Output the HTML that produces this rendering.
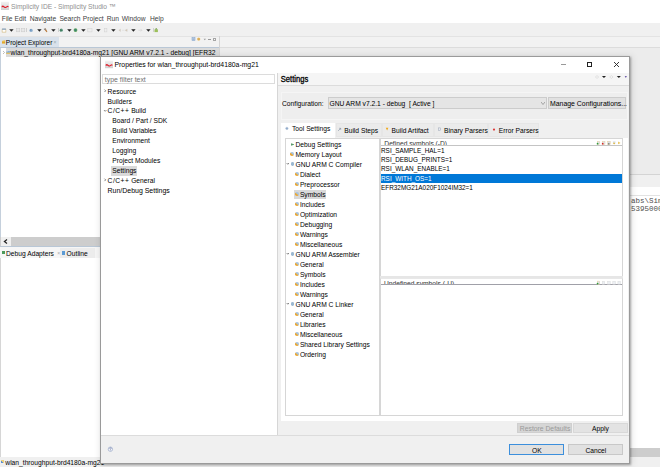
<!DOCTYPE html>
<html><head><meta charset="utf-8"><style>
html,body{margin:0;padding:0;}
body{width:660px;height:467px;position:relative;overflow:hidden;background:#f0f0f0;font-family:"Liberation Sans",sans-serif;}
.a{position:absolute;}
.t{position:absolute;white-space:pre;line-height:1;-webkit-text-stroke:0px currentColor;}
</style></head><body>
<div class="a" style="left:0px;top:0px;width:660px;height:12px;background:#ffffff;"></div>
<div class="a" style="left:0px;top:12px;width:660px;height:11px;background:#ffffff;"></div>
<div class="a" style="left:0px;top:23px;width:660px;height:13px;background:#f0f0f0;"></div>
<svg class="a" style="left:1px;top:1px;overflow:visible" width="9" height="10" viewBox="0 0 9 10"><g transform="translate(0.00,0.80)"><defs><linearGradient id="lg1" x1="0" y1="0" x2="0" y2="1"><stop offset="0" stop-color="#f2f2f2"/><stop offset="1" stop-color="#cfcfcf"/></linearGradient></defs><rect width="8" height="8.2" fill="url(#lg1)"/><path d="M0.6 4.2 Q2 3.2 3.2 4.4 Q4.4 5.8 5.6 4.4 Q6.6 3.6 7.6 4.4 L7.4 5.4 Q6.4 4.8 5.6 5.6 Q4.2 7 3 5.6 Q2 4.6 0.8 5.6Z" fill="#e01c2a"/></g></svg>
<div class="t" style="left:0;top:0;transform:translate(11px,4px) scaleX(0.9346);transform-origin:0 0;font-size:7.15px;color:#909090;-webkit-text-stroke:0;">Simplicity IDE - Simplicity Studio ™</div>
<div class="t" style="left:0;top:0;transform:translate(1.8px,16px) scaleX(0.9346);transform-origin:0 0;font-size:7.17px;color:#404040;">File</div>
<div class="t" style="left:0;top:0;transform:translate(14.5px,16px) scaleX(0.9346);transform-origin:0 0;font-size:7.17px;color:#404040;">Edit</div>
<div class="t" style="left:0;top:0;transform:translate(29.7px,16px) scaleX(0.9346);transform-origin:0 0;font-size:7.17px;color:#404040;">Navigate</div>
<div class="t" style="left:0;top:0;transform:translate(59.4px,16px) scaleX(0.9346);transform-origin:0 0;font-size:7.17px;color:#404040;">Search</div>
<div class="t" style="left:0;top:0;transform:translate(82.8px,16px) scaleX(0.9346);transform-origin:0 0;font-size:7.17px;color:#404040;">Project</div>
<div class="t" style="left:0;top:0;transform:translate(106.7px,16px) scaleX(0.9346);transform-origin:0 0;font-size:7.17px;color:#404040;">Run</div>
<div class="t" style="left:0;top:0;transform:translate(121.7px,16px) scaleX(0.9346);transform-origin:0 0;font-size:7.17px;color:#404040;">Window</div>
<div class="t" style="left:0;top:0;transform:translate(150px,16px) scaleX(0.9346);transform-origin:0 0;font-size:7.17px;color:#404040;">Help</div>
<svg class="a" style="left:1px;top:28px;overflow:visible" width="7" height="6" viewBox="0 0 7 6"><g transform="translate(0.80,0.30)"><rect x="0.3" y="0.8" width="3.8" height="3" fill="#fff" stroke="#c9a860" stroke-width="0.5"/><rect x="0.3" y="0.3" width="3.8" height="1" fill="#6d95c8"/></g></svg>
<svg class="a" style="left:9.2px;top:29px" width="5" height="3" viewBox="0 0 5 3"><path d="M0.2 0.2H4.6L2.4 2.8Z" fill="#222"/></svg>
<svg class="a" style="left:16px;top:28px;overflow:visible" width="6" height="6" viewBox="0 0 6 6"><g transform="translate(0.30,0.30)"><rect x="0.3" y="0.3" width="3.2" height="3.2" fill="#e8e8e8" stroke="#c8c8c8" stroke-width="0.5"/></g></svg>
<svg class="a" style="left:21px;top:28px;overflow:visible" width="6" height="6" viewBox="0 0 6 6"><g transform="translate(0.30,0.30)"><rect x="0.3" y="0.3" width="3.2" height="3.2" fill="#e8e8e8" stroke="#c8c8c8" stroke-width="0.5"/></g></svg>
<div class="a" style="left:26px;top:27.8px;width:0.6px;height:4.6px;background:#d0d0d0;"></div>
<svg class="a" style="left:29px;top:28px;overflow:visible" width="5" height="6" viewBox="0 0 5 6"><g transform="translate(0.20,0.50)"><circle cx="1.9" cy="1.9" r="1.7" fill="#8fb0cf"/><circle cx="1.6" cy="1.5" r="0.7" fill="#5a85b5"/></g></svg>
<svg class="a" style="left:36.6px;top:29px" width="5" height="3" viewBox="0 0 5 3"><path d="M0.2 0.2H4.6L2.4 2.8Z" fill="#222"/></svg>
<svg class="a" style="left:43px;top:28px;overflow:visible" width="6" height="6" viewBox="0 0 6 6"><g transform="translate(0.60,0.00)"><path d="M0.5 1.2L2 0.2L3.8 3.8L3 4.2Z" fill="#b7783a"/><rect x="0.3" y="0.6" width="2" height="1.2" fill="#8a8a8a"/></g></svg>
<svg class="a" style="left:51px;top:29px" width="5" height="3" viewBox="0 0 5 3"><path d="M0.2 0.2H4.6L2.4 2.8Z" fill="#222"/></svg>
<div class="a" style="left:57.6px;top:27.8px;width:0.6px;height:4.6px;background:#d0d0d0;"></div>
<svg class="a" style="left:59px;top:28px;overflow:visible" width="6" height="6" viewBox="0 0 6 6"><g transform="translate(0.40,0.30)"><circle cx="1.9" cy="1.9" r="1.6" fill="#6aa08a"/><path d="M0.8 0.6L3.4 1.9L0.8 3.2Z" fill="#3d7a5a"/></g></svg>
<svg class="a" style="left:66.8px;top:29px" width="5" height="3" viewBox="0 0 5 3"><path d="M0.2 0.2H4.6L2.4 2.8Z" fill="#222"/></svg>
<svg class="a" style="left:73px;top:28px;overflow:visible" width="6" height="6" viewBox="0 0 6 6"><g transform="translate(0.40,0.00)"><circle cx="2.1" cy="2.1" r="1.9" fill="#5aa35a"/><path d="M1.4 0.9L3.2 2.1L1.4 3.3Z" fill="#2d6a8f"/></g></svg>
<svg class="a" style="left:80.7px;top:29px" width="5" height="3" viewBox="0 0 5 3"><path d="M0.2 0.2H4.6L2.4 2.8Z" fill="#222"/></svg>
<svg class="a" style="left:87px;top:28px;overflow:visible" width="7" height="6" viewBox="0 0 7 6"><g transform="translate(0.50,0.20)"><rect x="0.3" y="0.5" width="4.2" height="3.2" fill="#eee" stroke="#d0d0d0" stroke-width="0.5"/></g></svg>
<svg class="a" style="left:96.4px;top:29px" width="5" height="3" viewBox="0 0 5 3"><path d="M0.2 0.2H4.6L2.4 2.8Z" fill="#222"/></svg>
<svg class="a" style="left:104px;top:28px;overflow:visible" width="5" height="6" viewBox="0 0 5 6"><g transform="translate(0.00,0.20)"><rect x="0.3" y="0.3" width="2.6" height="3.4" fill="#eee" stroke="#d0d0d0" stroke-width="0.5"/></g></svg>
<svg class="a" style="left:111.4px;top:29px" width="5" height="3" viewBox="0 0 5 3"><path d="M0.2 0.2H4.6L2.4 2.8Z" fill="#222"/></svg>
<svg class="a" style="left:118px;top:28px;overflow:visible" width="11" height="5" viewBox="0 0 11 5"><g transform="translate(0.50,0.80)"><path d="M0.3 1.5L2 0.3V2.7Z M3.5 1.5H6 M6.5 1.5L8.7 0.3V2.7Z" fill="#d8c8b0" stroke="#d0d0d0" stroke-width="0.4"/></g></svg>
<svg class="a" style="left:130.8px;top:29px" width="5" height="3" viewBox="0 0 5 3"><path d="M0.2 0.2H4.6L2.4 2.8Z" fill="#222"/></svg>
<svg class="a" style="left:138px;top:28px;overflow:visible" width="6" height="5" viewBox="0 0 6 5"><g transform="translate(0.20,0.80)"><path d="M0.3 1.5H3.7 M2.5 0.3L3.7 1.5L2.5 2.7" fill="none" stroke="#d0d0d0" stroke-width="0.6"/></g></svg>
<svg class="a" style="left:145.9px;top:29px" width="5" height="3" viewBox="0 0 5 3"><path d="M0.2 0.2H4.6L2.4 2.8Z" fill="#222"/></svg>
<div class="a" style="left:152.6px;top:27.8px;width:0.6px;height:4.6px;background:#d0d0d0;"></div>
<svg class="a" style="left:154px;top:28px;overflow:visible" width="6" height="6" viewBox="0 0 6 6"><g transform="translate(0.20,0.00)"><rect x="0.3" y="1.5" width="3.4" height="2.6" fill="#9cbf5a"/><path d="M2 0L3.5 1.6H0.5Z" fill="#6a9a3a"/></g></svg>
<div class="a" style="left:0px;top:36px;width:220px;height:1px;background:#e3e3e3;"></div>
<div class="a" style="left:0px;top:37px;width:219px;height:10.5px;background:#f2f2f2;"></div>
<div class="a" style="left:0px;top:37px;width:59px;height:10.5px;background:#d9e2ec;"></div>
<div class="a" style="left:0px;top:47px;width:219px;height:1px;background:#b9c7d6;"></div>
<div class="a" style="left:0px;top:48px;width:219px;height:189px;background:#ffffff;"></div>
<div class="a" style="left:0px;top:48px;width:1px;height:189px;background:#c5d0dc;"></div>
<div class="a" style="left:219px;top:36px;width:1px;height:210px;background:#d4d4d4;"></div>
<svg class="a" style="left:1px;top:40px;overflow:visible" width="6" height="5" viewBox="0 0 6 5"><g transform="translate(0.90,0.20)"><path d="M0.1 0.5H1.3L1.7 0.1H3.2V3.2H0.1Z" fill="#f0c860"/><path d="M0.1 1.4H3.2V3.2H0.1Z" fill="#e0a830"/></g></svg>
<div class="t" style="left:0;top:0;transform:translate(5.8px,39px) scaleX(0.9346);transform-origin:0 0;font-size:7.01px;color:#000;">Project Explorer</div>
<div class="t" style="left:0;top:0;transform:translate(53.5px,40px) scaleX(0.9346);transform-origin:0 0;font-size:5.35px;color:#9aa;">×</div>
<svg class="a" style="left:191px;top:37px;overflow:visible" width="6" height="5" viewBox="0 0 6 5"><g transform="translate(0.80,0.40)"><rect x="0.2" y="0.2" width="3" height="3" fill="#c5d5e8" stroke="#7a9cc6" stroke-width="0.5"/><path d="M0.8 1.7H2.6" stroke="#4a70a8" stroke-width="0.5"/></g></svg>
<svg class="a" style="left:196px;top:37px;overflow:visible" width="6" height="5" viewBox="0 0 6 5"><g transform="translate(0.80,0.30)"><circle cx="1.9" cy="1.8" r="1.6" fill="#e9c070"/><path d="M0.8 1.8H3" stroke="#b07a20" stroke-width="0.5"/></g></svg>
<svg class="a" style="left:203px;top:38px;overflow:visible" width="5" height="4" viewBox="0 0 5 4"><g transform="translate(0.40,0.60)"><path d="M0.2 0.2H2.6L1.4 1.6Z" fill="#9a9a9a"/></g></svg>
<div class="a" style="left:208px;top:38.7px;width:3px;height:0.7px;background:#9a9a9a;"></div>
<div class="a" style="left:213px;top:37.6px;width:3px;height:3px;background:#f7f7f7;box-shadow:inset 0 0 0 1px #a5a5a5;"></div>
<div class="a" style="left:6px;top:47.8px;width:213px;height:9.3px;background:#dadada;"></div>
<svg class="a" style="left:2px;top:50px;overflow:visible" width="4" height="6" viewBox="0 0 4 6"><g transform="translate(0.80,0.80)"><path d="M0.2 0.2L1.7 1.7L0.2 3.2" fill="none" stroke="#a0a0a0" stroke-width="0.7"/></g></svg>
<svg class="a" style="left:6px;top:50px;overflow:visible" width="6" height="6" viewBox="0 0 6 6"><g transform="translate(0.10,0.40)"><path d="M0.2 1.2H1.6L2.1 0.6H3.8V3.6H0.2Z" fill="#7fb0e0"/><path d="M0.2 2.2H3.8V3.6H0.2Z" fill="#e8c060"/></g></svg>
<div class="t" style="left:0;top:0;transform:translate(10.6px,50px) scaleX(0.9346);transform-origin:0 0;font-size:7.17px;color:#000;">wlan_throughput-brd4180a-mg21 [GNU ARM v7.2.1 - debug] [EFR32</div>
<div class="a" style="left:0px;top:237px;width:101px;height:9px;background:#cdcdcd;"></div>
<div class="a" style="left:1px;top:237px;width:10px;height:9px;background:#f0f0f0;"></div>
<svg class="a" style="left:3px;top:238px;overflow:visible" width="6" height="7" viewBox="0 0 6 7"><g transform="translate(0.40,0.90)"><path d="M3.6 0.5L1 2.5L3.6 4.5" stroke="#222" stroke-width="1.2" fill="none"/></g></svg>
<div class="a" style="left:0px;top:246px;width:101px;height:1px;background:#b9c7d6;"></div>
<div class="a" style="left:0px;top:247px;width:101px;height:11px;background:#f6f6f6;"></div>
<div class="a" style="left:60px;top:248px;width:34.5px;height:10px;background:#ececec;"></div>
<div class="a" style="left:1.5px;top:251px;width:3px;height:3px;background:#4c9a5a;"></div>
<div class="t" style="left:0;top:0;transform:translate(6px,251px) scaleX(0.9346);transform-origin:0 0;font-size:7.17px;color:#000;">Debug Adapters</div>
<div class="t" style="left:0;top:0;transform:translate(57.2px,251px) scaleX(0.9346);transform-origin:0 0;font-size:5.35px;color:#aaa;">×</div>
<div class="a" style="left:62.2px;top:251px;width:2.5px;height:3.5px;background:#5b9bd5;"></div>
<div class="t" style="left:0;top:0;transform:translate(66.6px,251px) scaleX(0.9346);transform-origin:0 0;font-size:7.17px;color:#000;">Outline</div>
<div class="a" style="left:0px;top:258px;width:101px;height:199px;background:#ffffff;"></div>
<div class="a" style="left:0px;top:258px;width:1px;height:199px;background:#d6d6d6;"></div>
<div class="a" style="left:0px;top:457px;width:660px;height:10px;background:#f0f0f0;"></div>
<div class="a" style="left:1px;top:460px;width:3px;height:3px;background:linear-gradient(45deg,#5b8fd5 50%,#e8d080 50%);"></div>
<div class="t" style="left:0;top:0;transform:translate(5.3px,460px) scaleX(0.9346);transform-origin:0 0;font-size:7.17px;color:#000;">wlan_throughput-brd4180a-mg21</div>
<div class="a" style="left:220px;top:36px;width:440px;height:1px;background:#e3e3e3;"></div>
<div class="a" style="left:220px;top:37px;width:440px;height:10.5px;background:#f2f2f2;"></div>
<div class="a" style="left:220px;top:47px;width:440px;height:1px;background:#dcdcdc;"></div>
<div class="a" style="left:220px;top:48px;width:440px;height:126px;background:#ececec;"></div>
<div class="a" style="left:220px;top:174px;width:440px;height:1px;background:#d4d4d4;"></div>
<div class="a" style="left:220px;top:175px;width:440px;height:11.5px;background:#f0f0f0;"></div>
<div class="a" style="left:220px;top:186.5px;width:440px;height:1px;background:#d4d4d4;"></div>
<div class="a" style="left:220px;top:187px;width:440px;height:261px;background:#ffffff;"></div>
<div class="a" style="left:220px;top:194.6px;width:440px;height:0.8px;background:#e3e3e3;"></div>
<div class="t" style="left:0;top:0;transform:translate(631px,198px);transform-origin:0 0;font-size:7.5px;color:#505050;font-family:'Liberation Mono', monospace;">abs\Sim</div>
<div class="t" style="left:0;top:0;transform:translate(631px,206px);transform-origin:0 0;font-size:7.5px;color:#505050;font-family:'Liberation Mono', monospace;">5395000</div>
<div class="a" style="left:220px;top:447.8px;width:440px;height:9.4px;background:#cdcdcd;"></div>
<div class="a" style="left:101px;top:57px;width:528px;height:405.5px;background:#f0f0f0;box-shadow:0 0 0 1px #9a9a9a, 1px 1px 2px 1px rgba(0,0,0,0.3), 1px 1px 7px 2px rgba(0,0,0,0.1);"></div>
<div class="a" style="left:101px;top:57px;width:528px;height:16px;background:#ffffff;"></div>
<svg class="a" style="left:105px;top:60px;overflow:visible" width="9" height="10" viewBox="0 0 9 10"><g transform="translate(0.00,0.70)"><defs><linearGradient id="lg2" x1="0" y1="0" x2="0" y2="1"><stop offset="0" stop-color="#f2f2f2"/><stop offset="1" stop-color="#cfcfcf"/></linearGradient></defs><rect width="8" height="7.5" fill="url(#lg2)"/><path d="M0.6 3.8 Q2 2.8 3.2 4 Q4.4 5.4 5.6 4 Q6.6 3.2 7.6 4 L7.4 5 Q6.4 4.4 5.6 5.2 Q4.2 6.6 3 5.2 Q2 4.2 0.8 5.2Z" fill="#e01c2a"/></g></svg>
<div class="t" style="left:0;top:0;transform:translate(114.5px,61px) scaleX(0.9346);transform-origin:0 0;font-size:7.33px;color:#000;-webkit-text-stroke:0;">Properties for wlan_throughput-brd4180a-mg21</div>
<div class="a" style="left:561px;top:64px;width:5px;height:0.7px;background:#999;"></div>
<div class="a" style="left:587px;top:62px;width:4.8px;height:4.8px;box-shadow:inset 0 0 0 1px #222;"></div>
<svg class="a" style="left:613.5px;top:62px" width="5" height="5" viewBox="0 0 5 5"><path d="M0 0L5 5M5 0L0 5" stroke="#222" stroke-width="0.9"/></svg>
<div class="a" style="left:101px;top:73px;width:176.5px;height:362px;background:#ffffff;"></div>
<div class="a" style="left:102px;top:74.2px;width:173px;height:10.2px;background:#ffffff;box-shadow:inset 0 0 0 1px #dcdcdc;"></div>
<div class="t" style="left:0;top:0;transform:translate(104.8px,76px) scaleX(0.9346);transform-origin:0 0;font-size:7.38px;color:#707070;">type filter text</div>
<div class="a" style="left:277px;top:73px;width:1.3px;height:362px;background:#d6d6d6;"></div>
<svg class="a" style="left:104px;top:89px;overflow:visible" width="4" height="5" viewBox="0 0 4 5"><g transform="translate(0.30,0.40)"><path d="M0.2 0.2L1.4 1.4L0.2 2.6" fill="none" stroke="#555" stroke-width="0.75"/></g></svg>
<div class="t" style="left:0;top:0;transform:translate(107.6px,89px) scaleX(0.9346);transform-origin:0 0;font-size:7.17px;color:#000;">Resource</div>
<div class="t" style="left:0;top:0;transform:translate(107.6px,99px) scaleX(0.9346);transform-origin:0 0;font-size:7.17px;color:#000;">Builders</div>
<svg class="a" style="left:103px;top:109px;overflow:visible" width="5" height="4" viewBox="0 0 5 4"><g transform="translate(0.80,0.90)"><path d="M0.2 0.2L1.4 1.4L2.6 0.2" fill="none" stroke="#555" stroke-width="0.75"/></g></svg>
<div class="t" style="left:0;top:0;transform:translate(107.6px,108px) scaleX(0.9346);transform-origin:0 0;font-size:7.17px;color:#000;"><span style="letter-spacing:0.5px">C/C++</span> Build</div>
<div class="t" style="left:0;top:0;transform:translate(112.3px,118px) scaleX(0.9346);transform-origin:0 0;font-size:7.17px;color:#000;">Board / Part / SDK</div>
<div class="t" style="left:0;top:0;transform:translate(112.3px,128px) scaleX(0.9346);transform-origin:0 0;font-size:7.17px;color:#000;">Build Variables</div>
<div class="t" style="left:0;top:0;transform:translate(112.3px,138px) scaleX(0.9346);transform-origin:0 0;font-size:7.17px;color:#000;">Environment</div>
<div class="t" style="left:0;top:0;transform:translate(112.3px,148px) scaleX(0.9346);transform-origin:0 0;font-size:7.17px;color:#000;">Logging</div>
<div class="t" style="left:0;top:0;transform:translate(112.3px,158px) scaleX(0.9346);transform-origin:0 0;font-size:7.17px;color:#000;">Project Modules</div>
<div class="a" style="left:111px;top:166.20000000000002px;width:25.8px;height:9.5px;background:#d9d9d9;"></div>
<div class="t" style="left:0;top:0;transform:translate(112.3px,168px) scaleX(0.9346);transform-origin:0 0;font-size:7.17px;color:#000;">Settings</div>
<svg class="a" style="left:104px;top:178px;overflow:visible" width="4" height="5" viewBox="0 0 4 5"><g transform="translate(0.30,0.50)"><path d="M0.2 0.2L1.4 1.4L0.2 2.6" fill="none" stroke="#555" stroke-width="0.75"/></g></svg>
<div class="t" style="left:0;top:0;transform:translate(107.6px,178px) scaleX(0.9346);transform-origin:0 0;font-size:7.17px;color:#000;"><span style="letter-spacing:0.5px">C/C++</span> General</div>
<div class="t" style="left:0;top:0;transform:translate(107.6px,187px) scaleX(0.9346);transform-origin:0 0;font-size:7.44px;color:#000;">Run/Debug Settings</div>
<div class="a" style="left:278px;top:73px;width:351px;height:12.5px;background:#f5f5f5;"></div>
<div class="t" style="left:0;top:0;transform:translate(280.8px,76px) scaleX(0.9346);transform-origin:0 0;font-size:8.13px;color:#000;-webkit-text-stroke:0.3px #000;">Settings</div>
<div class="a" style="left:278px;top:85.3px;width:351px;height:0.8px;background:#dcdcdc;"></div>
<svg class="a" style="left:595px;top:75px;overflow:visible" width="5" height="5" viewBox="0 0 5 5"><g transform="translate(0.00,0.30)"><path d="M2 0.3L3.7 1.7L2 3.1L0.3 1.7Z" fill="none" stroke="#d4d4d4" stroke-width="0.6"/></g></svg>
<svg class="a" style="left:601px;top:75px;overflow:visible" width="7" height="5" viewBox="0 0 7 5"><g transform="translate(0.80,0.80)"><path d="M0.1 0.1H4.2L2.15 2.3Z" fill="#222"/></g></svg>
<svg class="a" style="left:609px;top:75px;overflow:visible" width="6" height="5" viewBox="0 0 6 5"><g transform="translate(0.40,0.30)"><path d="M2 0.3L3.7 1.7L2 3.1L0.3 1.7Z" fill="none" stroke="#d4d4d4" stroke-width="0.6"/></g></svg>
<svg class="a" style="left:616px;top:75px;overflow:visible" width="7" height="5" viewBox="0 0 7 5"><g transform="translate(0.70,0.80)"><path d="M0.1 0.1H4.2L2.15 2.3Z" fill="#222"/></g></svg>
<svg class="a" style="left:624px;top:76px;overflow:visible" width="5" height="3" viewBox="0 0 5 3"><g transform="translate(0.60,0.00)"><path d="M0.1 0.1H2.3L1.2 1.9Z" fill="#6b5aa8"/></g></svg>
<div class="a" style="left:280.5px;top:91.5px;width:347.5px;height:28.5px;background:#eeeeee;box-shadow:inset 0 0 0 1px #f5f5f5;"></div>
<div class="t" style="left:0;top:0;transform:translate(282px,101px) scaleX(0.9346);transform-origin:0 0;font-size:7.17px;color:#000;">Configuration:</div>
<div class="a" style="left:328px;top:97.3px;width:219px;height:11.6px;background:#e5e5e5;box-shadow:inset 0 0 0 1px #cccccc;"></div>
<div class="t" style="left:0;top:0;transform:translate(329.5px,101px) scaleX(0.9346);transform-origin:0 0;font-size:7.17px;color:#000;">GNU ARM v7.2.1 - debug&nbsp;&nbsp;[ Active ]</div>
<svg class="a" style="left:540.5px;top:102px" width="4" height="2.5" viewBox="0 0 4 2.5"><path d="M0 0L2 2.5L4 0" stroke="#777" stroke-width="0.6" fill="none"/></svg>
<div class="a" style="left:548.2px;top:97.3px;width:78.3px;height:11.6px;background:#e1e1e1;box-shadow:inset 0 0 0 1px #cccccc;"></div>
<div class="t" style="left:0;top:0;transform:translate(550px,100px) scaleX(0.9346);transform-origin:0 0;font-size:7.38px;color:#000;">Manage Configurations...</div>
<div class="a" style="left:280.8px;top:122.5px;width:54.69999999999999px;height:15.5px;background:#ffffff;"></div>
<svg class="a" style="left:285px;top:126px;overflow:visible" width="5" height="5" viewBox="0 0 5 5"><g transform="translate(0.30,0.80)"><circle cx="1.6" cy="1.6" r="1.2" fill="#8aa6c8" stroke="#b8c8dc" stroke-width="0.6"/></g></svg>
<div class="t" style="left:0;top:0;transform:translate(292px,126px) scaleX(0.9346);transform-origin:0 0;font-size:7.17px;color:#000;">Tool Settings</div>
<div class="a" style="left:335.8px;top:122.8px;width:46.0px;height:14.7px;background:#ebebeb;box-shadow:inset 0 0 0 1px #e6e6e6;"></div>
<svg class="a" style="left:337px;top:128px;overflow:visible" width="6" height="5" viewBox="0 0 6 5"><g transform="translate(0.80,0.00)"><path d="M0.3 2.9L2.9 0.3M1.3 0.3H2.9V1.9" fill="none" stroke="#7a8aa0" stroke-width="0.6"/></g></svg>
<div class="t" style="left:0;top:0;transform:translate(344.2px,128px) scaleX(0.9346);transform-origin:0 0;font-size:7.17px;color:#000;">Build Steps</div>
<div class="a" style="left:381.8px;top:122.8px;width:52.19999999999999px;height:14.7px;background:#ebebeb;box-shadow:inset 0 0 0 1px #e6e6e6;"></div>
<svg class="a" style="left:385px;top:127px;overflow:visible" width="5" height="5" viewBox="0 0 5 5"><g transform="translate(0.60,0.40)"><path d="M0.2 0.3H2.8L1.5 3Z" fill="#f0a818"/></g></svg>
<div class="t" style="left:0;top:0;transform:translate(391.5px,128px) scaleX(0.9346);transform-origin:0 0;font-size:7.17px;color:#000;">Build Artifact</div>
<div class="a" style="left:434px;top:122.8px;width:54px;height:14.7px;background:#ebebeb;box-shadow:inset 0 0 0 1px #e6e6e6;"></div>
<svg class="a" style="left:438px;top:127px;overflow:visible" width="5" height="5" viewBox="0 0 5 5"><g transform="translate(0.00,0.60)"><rect x="0.5" y="0.3" width="2.2" height="2.8" fill="#e8ecf2" stroke="#9aa4b4" stroke-width="0.5"/></g></svg>
<div class="t" style="left:0;top:0;transform:translate(444px,128px) scaleX(0.9346);transform-origin:0 0;font-size:7.17px;color:#000;">Binary Parsers</div>
<div class="a" style="left:488.4px;top:122.8px;width:51.0px;height:14.7px;background:#ebebeb;box-shadow:inset 0 0 0 1px #e6e6e6;"></div>
<svg class="a" style="left:492px;top:128px;overflow:visible" width="5" height="4" viewBox="0 0 5 4"><g transform="translate(0.80,0.40)"><circle cx="1.2" cy="1.2" r="1.1" fill="#e03a3a"/></g></svg>
<div class="t" style="left:0;top:0;transform:translate(498.8px,128px) scaleX(0.9346);transform-origin:0 0;font-size:7.17px;color:#000;">Error Parsers</div>
<div class="a" style="left:280.8px;top:137.5px;width:347.5px;height:283px;background:#ffffff;"></div>
<div class="a" style="left:285.3px;top:138.2px;width:94.5px;height:278px;background:#ffffff;box-shadow:inset 0 0 0 1px #d6d6d6;"></div>
<svg class="a" style="left:290.7px;top:142.7px" width="3.5" height="3" viewBox="0 0 3.5 3"><path d="M0 0.3L3.5 1.5L0 2.7Z" fill="#5a9a6a"/></svg>
<div class="t" style="left:0;top:0;transform:translate(295.5px,142px) scaleX(0.9346);transform-origin:0 0;font-size:7.17px;color:#000;">Debug Settings</div>
<div class="a" style="left:290.09999999999997px;top:152.295px;width:4.1px;height:3.7px;background:linear-gradient(40deg,#e8a838 42%,#a8c4e0 58%);border-radius:1.8px;"></div>
<div class="t" style="left:0;top:0;transform:translate(295.5px,152px) scaleX(0.9346);transform-origin:0 0;font-size:7.17px;color:#000;">Memory Layout</div>
<svg class="a" style="left:286px;top:162px;overflow:visible" width="5" height="4" viewBox="0 0 5 4"><g transform="translate(0.50,0.89)"><path d="M0.2 0.2L1.3 1.4L2.4 0.2" fill="none" stroke="#555" stroke-width="0.75"/></g></svg>
<div class="a" style="left:290.5px;top:162.19px;width:3.6px;height:3.6px;background:#9ab8d2;border-radius:1.4px;"></div>
<div class="t" style="left:0;top:0;transform:translate(295.5px,162px) scaleX(0.9346);transform-origin:0 0;font-size:7.17px;color:#000;">GNU ARM C Compiler</div>
<div class="a" style="left:294.49999999999994px;top:172.285px;width:4.1px;height:3.7px;background:linear-gradient(40deg,#e8a838 42%,#a8c4e0 58%);border-radius:1.8px;"></div>
<div class="t" style="left:0;top:0;transform:translate(299.9px,172px) scaleX(0.9346);transform-origin:0 0;font-size:7.17px;color:#000;">Dialect</div>
<div class="a" style="left:294.49999999999994px;top:182.27999999999997px;width:4.1px;height:3.7px;background:linear-gradient(40deg,#e8a838 42%,#a8c4e0 58%);border-radius:1.8px;"></div>
<div class="t" style="left:0;top:0;transform:translate(299.9px,182px) scaleX(0.9346);transform-origin:0 0;font-size:7.17px;color:#000;">Preprocessor</div>
<div class="a" style="left:294.4px;top:189.77499999999998px;width:31.6px;height:9.3px;background:#d9d9d9;"></div>
<div class="a" style="left:294.49999999999994px;top:192.27499999999998px;width:4.1px;height:3.7px;background:linear-gradient(40deg,#e8a838 42%,#a8c4e0 58%);border-radius:1.8px;"></div>
<div class="t" style="left:0;top:0;transform:translate(299.9px,192px) scaleX(0.9346);transform-origin:0 0;font-size:7.17px;color:#000;">Symbols</div>
<div class="a" style="left:294.49999999999994px;top:202.26999999999998px;width:4.1px;height:3.7px;background:linear-gradient(40deg,#e8a838 42%,#a8c4e0 58%);border-radius:1.8px;"></div>
<div class="t" style="left:0;top:0;transform:translate(299.9px,202px) scaleX(0.9346);transform-origin:0 0;font-size:7.17px;color:#000;">Includes</div>
<div class="a" style="left:294.49999999999994px;top:212.26499999999996px;width:4.1px;height:3.7px;background:linear-gradient(40deg,#e8a838 42%,#a8c4e0 58%);border-radius:1.8px;"></div>
<div class="t" style="left:0;top:0;transform:translate(299.9px,212px) scaleX(0.9346);transform-origin:0 0;font-size:7.17px;color:#000;">Optimization</div>
<div class="a" style="left:294.49999999999994px;top:222.25999999999996px;width:4.1px;height:3.7px;background:linear-gradient(40deg,#e8a838 42%,#a8c4e0 58%);border-radius:1.8px;"></div>
<div class="t" style="left:0;top:0;transform:translate(299.9px,222px) scaleX(0.9346);transform-origin:0 0;font-size:7.17px;color:#000;">Debugging</div>
<div class="a" style="left:294.49999999999994px;top:232.25499999999997px;width:4.1px;height:3.7px;background:linear-gradient(40deg,#e8a838 42%,#a8c4e0 58%);border-radius:1.8px;"></div>
<div class="t" style="left:0;top:0;transform:translate(299.9px,232px) scaleX(0.9346);transform-origin:0 0;font-size:7.17px;color:#000;">Warnings</div>
<div class="a" style="left:294.49999999999994px;top:242.24999999999997px;width:4.1px;height:3.7px;background:linear-gradient(40deg,#e8a838 42%,#a8c4e0 58%);border-radius:1.8px;"></div>
<div class="t" style="left:0;top:0;transform:translate(299.9px,242px) scaleX(0.9346);transform-origin:0 0;font-size:7.17px;color:#000;">Miscellaneous</div>
<svg class="a" style="left:286px;top:252px;overflow:visible" width="5" height="4" viewBox="0 0 5 4"><g transform="translate(0.50,0.84)"><path d="M0.2 0.2L1.3 1.4L2.4 0.2" fill="none" stroke="#555" stroke-width="0.75"/></g></svg>
<div class="a" style="left:290.5px;top:252.14499999999998px;width:3.6px;height:3.6px;background:#9ab8d2;border-radius:1.4px;"></div>
<div class="t" style="left:0;top:0;transform:translate(295.5px,252px) scaleX(0.9346);transform-origin:0 0;font-size:7.17px;color:#000;">GNU ARM Assembler</div>
<div class="a" style="left:294.49999999999994px;top:262.24px;width:4.1px;height:3.7px;background:linear-gradient(40deg,#e8a838 42%,#a8c4e0 58%);border-radius:1.8px;"></div>
<div class="t" style="left:0;top:0;transform:translate(299.9px,262px) scaleX(0.9346);transform-origin:0 0;font-size:7.17px;color:#000;">General</div>
<div class="a" style="left:294.49999999999994px;top:272.235px;width:4.1px;height:3.7px;background:linear-gradient(40deg,#e8a838 42%,#a8c4e0 58%);border-radius:1.8px;"></div>
<div class="t" style="left:0;top:0;transform:translate(299.9px,272px) scaleX(0.9346);transform-origin:0 0;font-size:7.17px;color:#000;">Symbols</div>
<div class="a" style="left:294.49999999999994px;top:282.23px;width:4.1px;height:3.7px;background:linear-gradient(40deg,#e8a838 42%,#a8c4e0 58%);border-radius:1.8px;"></div>
<div class="t" style="left:0;top:0;transform:translate(299.9px,282px) scaleX(0.9346);transform-origin:0 0;font-size:7.17px;color:#000;">Includes</div>
<div class="a" style="left:294.49999999999994px;top:292.225px;width:4.1px;height:3.7px;background:linear-gradient(40deg,#e8a838 42%,#a8c4e0 58%);border-radius:1.8px;"></div>
<div class="t" style="left:0;top:0;transform:translate(299.9px,292px) scaleX(0.9346);transform-origin:0 0;font-size:7.17px;color:#000;">Warnings</div>
<svg class="a" style="left:286px;top:302px;overflow:visible" width="5" height="4" viewBox="0 0 5 4"><g transform="translate(0.50,0.82)"><path d="M0.2 0.2L1.3 1.4L2.4 0.2" fill="none" stroke="#555" stroke-width="0.75"/></g></svg>
<div class="a" style="left:290.5px;top:302.12px;width:3.6px;height:3.6px;background:#9ab8d2;border-radius:1.4px;"></div>
<div class="t" style="left:0;top:0;transform:translate(295.5px,302px) scaleX(0.9346);transform-origin:0 0;font-size:7.17px;color:#000;">GNU ARM C Linker</div>
<div class="a" style="left:294.49999999999994px;top:312.21500000000003px;width:4.1px;height:3.7px;background:linear-gradient(40deg,#e8a838 42%,#a8c4e0 58%);border-radius:1.8px;"></div>
<div class="t" style="left:0;top:0;transform:translate(299.9px,312px) scaleX(0.9346);transform-origin:0 0;font-size:7.17px;color:#000;">General</div>
<div class="a" style="left:294.49999999999994px;top:322.21000000000004px;width:4.1px;height:3.7px;background:linear-gradient(40deg,#e8a838 42%,#a8c4e0 58%);border-radius:1.8px;"></div>
<div class="t" style="left:0;top:0;transform:translate(299.9px,322px) scaleX(0.9346);transform-origin:0 0;font-size:7.17px;color:#000;">Libraries</div>
<div class="a" style="left:294.49999999999994px;top:332.205px;width:4.1px;height:3.7px;background:linear-gradient(40deg,#e8a838 42%,#a8c4e0 58%);border-radius:1.8px;"></div>
<div class="t" style="left:0;top:0;transform:translate(299.9px,332px) scaleX(0.9346);transform-origin:0 0;font-size:7.17px;color:#000;">Miscellaneous</div>
<div class="a" style="left:294.49999999999994px;top:342.2px;width:4.1px;height:3.7px;background:linear-gradient(40deg,#e8a838 42%,#a8c4e0 58%);border-radius:1.8px;"></div>
<div class="t" style="left:0;top:0;transform:translate(299.9px,342px) scaleX(0.9346);transform-origin:0 0;font-size:7.17px;color:#000;">Shared Library Settings</div>
<div class="a" style="left:294.49999999999994px;top:352.195px;width:4.1px;height:3.7px;background:linear-gradient(40deg,#e8a838 42%,#a8c4e0 58%);border-radius:1.8px;"></div>
<div class="t" style="left:0;top:0;transform:translate(299.9px,352px) scaleX(0.9346);transform-origin:0 0;font-size:7.17px;color:#000;">Ordering</div>
<div class="a" style="left:380px;top:138.2px;width:243px;height:278px;background:#ffffff;"></div>
<div class="a" style="left:380px;top:138.2px;width:243px;height:138px;border:1px solid #d6d6d6;border-bottom:none;box-sizing:border-box;"></div>
<div class="a" style="left:381px;top:139px;width:241px;height:6px;overflow:hidden;"><div class="t" style="left:3.3px;top:1.5px;font-size:6.7px;color:#333;">Defined symbols (-D)</div></div>
<div class="a" style="left:381px;top:144.6px;width:241px;height:0.8px;background:#c4c4c4;"></div>
<svg class="a" style="left:596px;top:141px;overflow:visible" width="6" height="5" viewBox="0 0 6 5"><g transform="translate(0.60,0.10)"><rect x="0.8" y="0.1" width="2.4" height="3.2" fill="#dfe6ee" stroke="#e6c890" stroke-width="0.4"/><circle cx="1" cy="2.6" r="0.9" fill="#2f9a3a"/></g></svg>
<svg class="a" style="left:601px;top:141px;overflow:visible" width="6" height="5" viewBox="0 0 6 5"><g transform="translate(0.80,0.10)"><rect x="0.8" y="0.1" width="2.4" height="3.2" fill="#dfe6ee" stroke="#e6c890" stroke-width="0.4"/><rect x="0.1" y="1.8" width="1.6" height="1.6" fill="#d42a2a"/></g></svg>
<svg class="a" style="left:607px;top:141px;overflow:visible" width="5" height="5" viewBox="0 0 5 5"><g transform="translate(0.20,0.10)"><rect x="0.5" y="0.1" width="2.6" height="3.2" fill="#d6dde6" stroke="#e6c890" stroke-width="0.4"/><rect x="0.7" y="2.2" width="1.6" height="1.2" fill="#6a6a5a"/></g></svg>
<svg class="a" style="left:612px;top:141px;overflow:visible" width="5" height="5" viewBox="0 0 5 5"><g transform="translate(0.40,0.10)"><rect x="0.5" y="0.1" width="2.6" height="2.6" fill="#dfe6ee"/><path d="M0.6 1.6H2.8L1.7 3.4Z" fill="#e0b020"/></g></svg>
<svg class="a" style="left:617px;top:141px;overflow:visible" width="5" height="5" viewBox="0 0 5 5"><g transform="translate(0.50,0.10)"><path d="M0.6 0.4L3 1.8L0.6 3.2Z" fill="#e8c050"/></g></svg>
<div class="t" style="left:0;top:0;transform:translate(381px,148px) scaleX(0.9346);transform-origin:0 0;font-size:6.85px;color:#000;">RSI_SAMPLE_HAL=1</div>
<div class="t" style="left:0;top:0;transform:translate(381px,157px) scaleX(0.9346);transform-origin:0 0;font-size:6.85px;color:#000;">RSI_DEBUG_PRINTS=1</div>
<div class="t" style="left:0;top:0;transform:translate(381px,166px) scaleX(0.9346);transform-origin:0 0;font-size:6.85px;color:#000;">RSI_WLAN_ENABLE=1</div>
<div class="a" style="left:380.5px;top:173.6px;width:241.5px;height:9.3px;background:#0078d7;"></div>
<div class="t" style="left:0;top:0;transform:translate(381px,176px) scaleX(0.9346);transform-origin:0 0;font-size:6.85px;color:#ffffff;">RSI_WITH_OS=1</div>
<div class="t" style="left:0;top:0;transform:translate(381px,185px) scaleX(0.9346);transform-origin:0 0;font-size:6.85px;color:#000;">EFR32MG21A020F1024IM32=1</div>
<div class="a" style="left:380px;top:276.2px;width:243px;height:2.2px;background:#e6e6e6;"></div>
<div class="a" style="left:380px;top:278.4px;width:243px;height:137.8px;background:#ffffff;border:1px solid #d6d6d6;border-top-color:#e8e8e8;box-sizing:border-box;"></div>
<div class="a" style="left:381px;top:279.5px;width:241px;height:5px;overflow:hidden;"><div class="t" style="left:3px;top:1.6px;font-size:6.7px;color:#333;">Undefined symbols (-U)</div></div>
<div class="a" style="left:381px;top:283.9px;width:241px;height:0.9px;background:#a0a0a8;"></div>
<svg class="a" style="left:596px;top:281px;overflow:visible" width="6" height="5" viewBox="0 0 6 5"><g transform="translate(0.60,0.00)"><rect x="0.8" y="0.1" width="2.4" height="3.2" fill="#dfe6ee" stroke="#e6c890" stroke-width="0.4"/><circle cx="1" cy="2.6" r="0.9" fill="#2f9a3a"/></g></svg>
<svg class="a" style="left:601px;top:281px;overflow:visible" width="6" height="5" viewBox="0 0 6 5"><g transform="translate(0.80,0.00)"><rect x="0.4" y="0.2" width="2.6" height="3" fill="#eceff3" stroke="#d8d8d8" stroke-width="0.4"/></g></svg>
<svg class="a" style="left:607px;top:281px;overflow:visible" width="5" height="5" viewBox="0 0 5 5"><g transform="translate(0.20,0.00)"><rect x="0.4" y="0.2" width="2.6" height="3" fill="#eceff3" stroke="#d8d8d8" stroke-width="0.4"/></g></svg>
<svg class="a" style="left:612px;top:281px;overflow:visible" width="5" height="5" viewBox="0 0 5 5"><g transform="translate(0.40,0.00)"><rect x="0.4" y="0.2" width="2.6" height="3" fill="#eceff3" stroke="#d8d8d8" stroke-width="0.4"/></g></svg>
<svg class="a" style="left:617px;top:281px;overflow:visible" width="5" height="5" viewBox="0 0 5 5"><g transform="translate(0.50,0.00)"><rect x="0.4" y="0.2" width="2.6" height="3" fill="#eceff3" stroke="#d8d8d8" stroke-width="0.4"/></g></svg>
<div class="a" style="left:516.5px;top:422.7px;width:55.5px;height:10.6px;background:#d6d6d6;box-shadow:inset 0 0 0 1px #cfcfcf;"></div>
<div class="t" style="left:0;top:0;transform:translate(519.8px,425px) scaleX(0.9346);transform-origin:0 0;font-size:7.28px;color:#9a9a9a;-webkit-text-stroke:0;">Restore Defaults</div>
<div class="a" style="left:573.2px;top:422.7px;width:55px;height:10.6px;background:#e3e3e3;box-shadow:inset 0 0 0 1px #d8d8d8;"></div>
<div class="t" style="left:0;top:0;transform:translate(592px,426px) scaleX(0.9346);transform-origin:0 0;font-size:7.17px;color:#000;">Apply</div>
<div class="a" style="left:101px;top:435.2px;width:528px;height:0.8px;background:#dcdcdc;"></div>
<svg class="a" style="left:107px;top:446px;overflow:visible" width="7" height="7" viewBox="0 0 7 7"><g transform="translate(0.80,0.60)"><circle cx="2.6" cy="2.6" r="2.2" fill="#f4f6fa" stroke="#8a9ac0" stroke-width="0.6"/><path d="M1.8 2.0Q1.8 1.2 2.6 1.2Q3.4 1.2 3.4 1.9Q3.4 2.4 2.6 2.7V3.2" fill="none" stroke="#4a5a90" stroke-width="0.5"/><circle cx="2.6" cy="3.9" r="0.3" fill="#4a5a90"/></g></svg>
<div class="a" style="left:508.5px;top:444px;width:55px;height:11px;background:#e1e1e1;box-shadow:inset 0 0 0 1px #3c8fdc;"></div>
<div class="t" style="left:0;top:0;transform:translate(532px,448px) scaleX(0.9346);transform-origin:0 0;font-size:7.17px;color:#000;">OK</div>
<div class="a" style="left:568.3px;top:444px;width:55px;height:11px;background:#e1e1e1;box-shadow:inset 0 0 0 1px #c8c8c8;"></div>
<div class="t" style="left:0;top:0;transform:translate(585.5px,448px) scaleX(0.9346);transform-origin:0 0;font-size:7.17px;color:#000;">Cancel</div>
</body></html>
